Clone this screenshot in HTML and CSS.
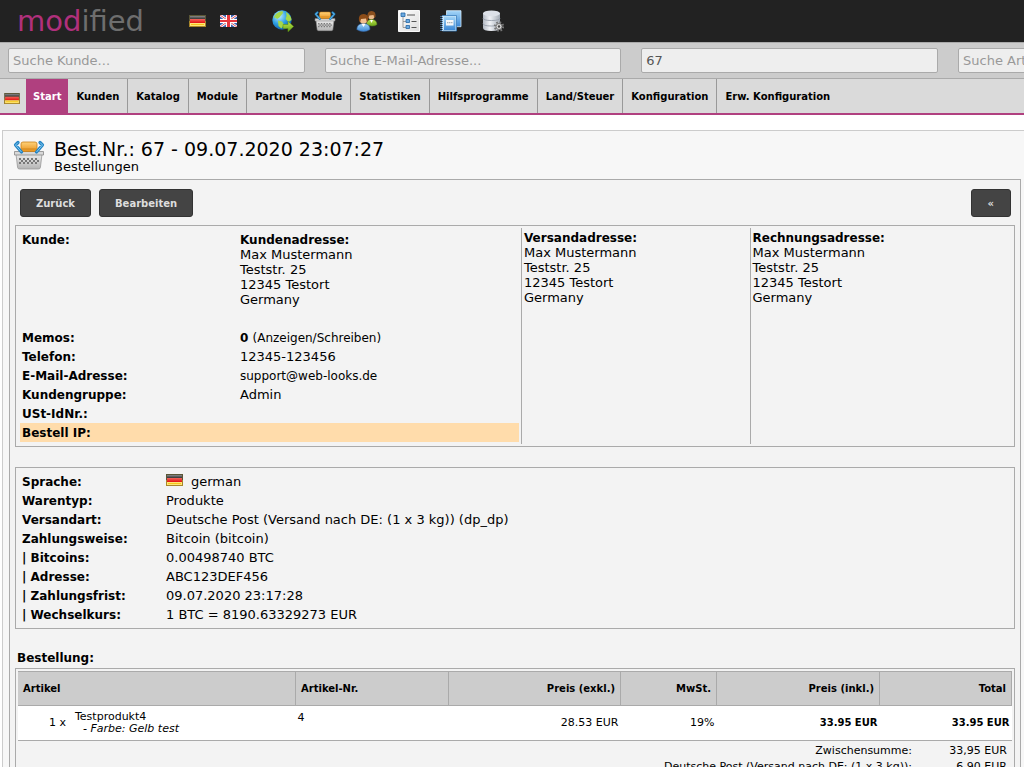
FILE: index.html
```html
<!DOCTYPE html>
<html lang="de">
<head>
<meta charset="utf-8">
<title>Bestellungen</title>
<link rel="stylesheet" href="styles.css">
</head>
<body>
<svg class="defs" aria-hidden="true">
  <defs>
    <linearGradient id="gRed" x2="0" y2="1"><stop stop-color="#f4665c"/><stop offset="1" stop-color="#e01010"/></linearGradient>
    <linearGradient id="gBlack" x2="0" y2="1"><stop stop-color="#8a8a8a"/><stop offset="1" stop-color="#333"/></linearGradient>
    <linearGradient id="gMetal" x2="0" y2="1"><stop stop-color="#ececec"/><stop offset="1" stop-color="#b4b4b4"/></linearGradient>
    <linearGradient id="gOrange" x2="0" y2="1"><stop stop-color="#ffd27a"/><stop offset="1" stop-color="#e8921c"/></linearGradient>
    <linearGradient id="gBlue" x2="0" y2="1"><stop stop-color="#a4d6f8"/><stop offset="1" stop-color="#3c88d6"/></linearGradient>
    <linearGradient id="gPaper" x2="1" y2="1"><stop stop-color="#fff"/><stop offset="1" stop-color="#dcdcdc"/></linearGradient>
    <radialGradient id="gSea" cx=".35" cy=".3" r=".8"><stop stop-color="#c4f0ff"/><stop offset=".5" stop-color="#2ea0e4"/><stop offset="1" stop-color="#0a4f9e"/></radialGradient>
    <linearGradient id="gDb" x2="1" y2="0"><stop stop-color="#b4bac4"/><stop offset=".4" stop-color="#f0f2f6"/><stop offset="1" stop-color="#a4acb6"/></linearGradient>
    <linearGradient id="gGreen" x2="0" y2="1"><stop stop-color="#bfe64c"/><stop offset="1" stop-color="#6ca61a"/></linearGradient>
  </defs>
  <symbol id="flag-de" viewBox="0 0 17 12">
    <path fill="#5a5636" d="M0 0h17v12H0z"/><path fill="#a8862a" d="M0 6h17v6H0z"/>
    <path fill="url(#gBlack)" d="M1 1h15v3H1z"/><path fill="url(#gRed)" d="M1 4h15v4H1z"/><path fill="#ffe676" d="M1 8h15v3H1z"/><path fill="#f4c61c" d="M2 9h13v1H2z"/>
  </symbol>
  <symbol id="flag-gb" viewBox="0 0 17 12">
    <path fill="#3f62b4" d="M0 0h17v12H0z"/><path stroke="#fff" stroke-width="2.600" d="M0 0l17 12M17 0L0 12"/><path stroke="#e0525c" stroke-width="1" d="M0 0l17 12M17 0L0 12"/>
    <path fill="#fff" d="M6 0h5v12H6zM0 4h17v4H0z"/><path fill="#e8363e" d="M7 0h3v12H7zM0 5h17v2H0z"/>
  </symbol>
  <symbol id="basket" viewBox="0 0 32 32">
    <path fill="url(#gMetal)" stroke="#999" stroke-width=".8" d="M3 15h26l-1.600 13.500q-.2 1.500-2 1.500H6.600q-1.800 0-2-1.500z"/>
    <path fill="#d8d8d8" stroke="#888" stroke-width=".8" d="M1.500 12.500h29v3.500h-29z"/>
    <path fill="#777" d="M6 19h2v2H6zm4 0h2v2h-2zm4 0h2v2h-2zm4 0h2v2h-2zm4 0h2v2h-2zM8 21h2v2H8zm4 0h2v2h-2zm4 0h2v2h-2zm4 0h2v2h-2zm4 0h2v2h-2zM6 23h2v2H6zm4 0h2v2h-2zm4 0h2v2h-2zm4 0h2v2h-2zm4 0h2v2h-2z"/>
    <rect x="8" y="3" width="16" height="9.500" rx="2" fill="url(#gOrange)" stroke="#c98018" stroke-width=".8"/>
    <path stroke="#c98018" stroke-width=".8" d="M9 10h14"/>
    <path fill="none" stroke="#2484c4" stroke-width="3.200" stroke-linecap="round" stroke-linejoin="round" d="M5 3.500L2.500 6l6 7M27 3.500L29.500 6l-6 7"/>
    <path fill="none" stroke="#84ccf2" stroke-width="1" d="M5 3.500L2.500 6l6 7M27 3.500L29.500 6l-6 7"/>
  </symbol>
  <symbol id="globe" viewBox="0 0 22 22">
    <circle cx="10" cy="10" r="9.700" fill="url(#gSea)"/>
    <path fill="#a4d84a" d="M4.500 3.500q3-2.500 6-2.500l.5 2-2 2.500-1.500 2L5 9 3.500 7.500 2 8q.3-2.500 2.500-4.500zM14 2q5 3 5.500 8l-3 2-3-3 1-3zM6 10.500l4 1 2 3-2.500 4-3-2.500z"/>
    <path fill="url(#gGreen)" stroke="#5c9412" stroke-width=".6" d="M11 14.500h5v-3.200l5.600 5.200-5.600 5.200v-3.200h-5z"/>
  </symbol>
  <symbol id="users" viewBox="0 0 22 22">
    <path fill="url(#gGreen)" stroke="#5d8a22" stroke-width=".5" d="M10.500 15q0-5.500 5-5.500t5.500 5q-2 1.500-5 1.500z"/><path fill="#fff" d="M14 10h3l-1.500 3z"/><circle cx="15.300" cy="6" r="3.300" fill="#eaba8a"/><path fill="#8a4f1e" d="M11.500 7.500Q10.800 1 15.500 1t4 6l-1.200 1-.8-3-4.200.5-.6 2.500z"/>
    <path fill="url(#gBlue)" stroke="#3868a8" stroke-width=".6" d="M.8 19.500Q1 13.500 7.500 13.500t6.500 6q-3 2-6.500 2t-6.700-2z"/><path fill="#fff" d="M5.500 13.700h4l-2 3.300z"/><circle cx="7.500" cy="9.500" r="4" fill="#f2c090"/><path fill="#8c4c18" d="M3 11Q2 4 7.600 4t4.400 7l-1.200 1-.8-3.500L5 9l-.8 3z"/>
  </symbol>
  <symbol id="tree" viewBox="0 0 22 22">
    <path fill="url(#gPaper)" stroke="#f8f8f8" d="M.5.500h21v21H.5z"/><path fill="none" stroke="#888" stroke-width=".8" d="M5 7v10.500h3M5 11.500h3"/><path stroke="#444" stroke-width=".9" d="M9 5h8M13.500 11.500h5M13.500 17.500h5"/>
    <path fill="#6caae0" stroke="#2466a4" stroke-width=".8" d="M3 3h4v3.500H3zM8 9.500h3.500v3H8zM8 15.500h3.500v3H8z"/>
  </symbol>
  <symbol id="books" viewBox="0 0 22 22">
    <path fill="url(#gBlue)" stroke="#d4ebfa" stroke-width=".8" d="M6.500.700h14.500v16H6.500z"/><path fill="#cfe6f6" stroke="#3a7fbe" stroke-width=".8" d="M2.500 5.500h14v15.500h-14z"/><path fill="url(#gBlue)" d="M4 6.500h11.500v13.500H4z"/>
    <path fill="#f6f8fa" d="M6 10h7.500v5.500H6z"/><path stroke="#7a8c9c" stroke-width=".8" stroke-dasharray="1.500 .5" d="M7 12.700h5.500"/><path stroke="#dff0ff" stroke-width="1" stroke-dasharray="1 1" d="M2.300 6v15"/><path stroke="#4a8ccc" stroke-width="1.200" stroke-dasharray="1 1" d="M1 6v15"/>
  </symbol>
  <symbol id="database" viewBox="0 0 22 22">
    <path fill="url(#gDb)" d="M1 3v15q0 3 8.500 3t8.500-3V3z"/><ellipse cx="9.500" cy="3.400" rx="8.500" ry="2.900" fill="#dde1e8"/><path fill="none" stroke="#969eaa" stroke-width=".9" d="M1 8q0 2.500 8.500 2.500T18 8M1 13.500q0 2.500 8.500 2.500t8.500-2.500"/>
    <circle cx="17" cy="16.500" r="4.200" fill="none" stroke="#777" stroke-width="2" stroke-dasharray="1.650 1.650"/><circle cx="17" cy="16.500" r="3" fill="#ddd" stroke="#777" stroke-width="1"/><circle cx="17" cy="16.500" r="1.200" fill="#444"/>
  </symbol>
</svg>

<header class="topbar">
  <a class="logo" href="#"><span class="logo-accent">mod</span>ified</a>
  <nav class="langs" aria-label="Sprache">
    <a href="#" aria-label="Deutsch"><svg class="flag"><use href="#flag-de"/></svg></a>
    <a href="#" aria-label="English"><svg class="flag"><use href="#flag-gb"/></svg></a>
  </nav>
  <nav class="tools" aria-label="Schnellzugriff">
    <a href="#" aria-label="Shop"><svg><use href="#globe"/></svg></a>
    <a href="#" aria-label="Bestellungen"><svg><use href="#basket"/></svg></a>
    <a href="#" aria-label="Kunden"><svg><use href="#users"/></svg></a>
    <a href="#" aria-label="Kategorien"><svg><use href="#tree"/></svg></a>
    <a href="#" aria-label="Content"><svg><use href="#books"/></svg></a>
    <a href="#" aria-label="Datenbank"><svg><use href="#database"/></svg></a>
  </nav>
</header>

<form class="searchbar">
  <input type="text" aria-label="Suche Kunde" placeholder="Suche Kunde...">
  <input type="text" aria-label="Suche E-Mail-Adresse" placeholder="Suche E-Mail-Adresse...">
  <input type="text" aria-label="Suche Bestellung" value="67">
  <input type="text" aria-label="Suche Artikel" placeholder="Suche Artikel...">
</form>

<nav class="menu" aria-label="Hauptmenü">
  <a class="menu-flag" href="#" aria-label="Deutsch"><svg class="flag"><use href="#flag-de"/></svg></a>
  <a class="active" href="#">Start</a>
  <a href="#">Kunden</a>
  <a href="#">Katalog</a>
  <a href="#">Module</a>
  <a href="#">Partner Module</a>
  <a href="#">Statistiken</a>
  <a href="#">Hilfsprogramme</a>
  <a href="#">Land/Steuer</a>
  <a href="#">Konfiguration</a>
  <a href="#">Erw. Konfiguration</a>
</nav>

<main class="page">
  <div class="heading">
    <svg class="heading-icon" aria-hidden="true"><use href="#basket"/></svg>
    <div>
      <h1>Best.Nr.: 67 - 09.07.2020 23:07:27</h1>
      <p>Bestellungen</p>
    </div>
  </div>

  <div class="content">
    <div class="actions">
      <button type="button">Zurück</button>
      <button type="button">Bearbeiten</button>
      <button type="button" class="collapse" aria-label="Seitenleiste">«</button>
    </div>

    <section class="box customer">
      <table class="facts customer-facts">
        <tr class="address-row"><th>Kunde:</th><td><b>Kundenadresse:</b><br>Max Mustermann<br>Teststr. 25<br>12345 Testort<br>Germany</td></tr>
        <tr><th>Memos:</th><td><b>0</b> <a class="small" href="#">(Anzeigen/Schreiben)</a></td></tr>
        <tr><th>Telefon:</th><td>12345-123456</td></tr>
        <tr><th>E-Mail-Adresse:</th><td><a class="small" href="#">support@web-looks.de</a></td></tr>
        <tr><th>Kundengruppe:</th><td>Admin</td></tr>
        <tr><th>USt-IdNr.:</th><td></td></tr>
        <tr class="highlight"><th>Bestell IP:</th><td></td></tr>
      </table>
      <address><b>Versandadresse:</b><br>Max Mustermann<br>Teststr. 25<br>12345 Testort<br>Germany</address>
      <address><b>Rechnungsadresse:</b><br>Max Mustermann<br>Teststr. 25<br>12345 Testort<br>Germany</address>
    </section>

    <section class="box payment">
      <table class="facts payment-facts">
        <tr><th>Sprache:</th><td><svg class="flag" aria-hidden="true"><use href="#flag-de"/></svg>german</td></tr>
        <tr><th>Warentyp:</th><td>Produkte</td></tr>
        <tr><th>Versandart:</th><td>Deutsche Post (Versand nach DE: (1 x 3 kg)) (dp_dp)</td></tr>
        <tr><th>Zahlungsweise:</th><td>Bitcoin (bitcoin)</td></tr>
        <tr><th>| Bitcoins:</th><td>0.00498740 BTC</td></tr>
        <tr><th>| Adresse:</th><td>ABC123DEF456</td></tr>
        <tr><th>| Zahlungsfrist:</th><td>09.07.2020 23:17:28</td></tr>
        <tr><th>| Wechselkurs:</th><td>1 BTC = 8190.63329273 EUR</td></tr>
      </table>
    </section>

    <h2>Bestellung:</h2>
    <section class="box order">
      <table class="items">
        <colgroup><col class="c-qty"><col><col class="c-model"><col class="c-net"><col class="c-tax"><col class="c-gross"><col class="c-total"></colgroup>
        <thead>
          <tr><th colspan="2">Artikel</th><th>Artikel-Nr.</th><th class="num">Preis (exkl.)</th><th class="num">MwSt.</th><th class="num">Preis (inkl.)</th><th class="num">Total</th></tr>
        </thead>
        <tbody>
          <tr><td class="num">1 x</td><td class="name">Testprodukt4<br><i>- Farbe: Gelb test</i></td><td class="model">4</td><td class="num">28.53 EUR</td><td class="num">19%</td><td class="num strong">33.95 EUR</td><td class="num strong">33.95 EUR</td></tr>
        </tbody>
      </table>
      <dl class="sums">
        <dt>Zwischensumme:</dt><dd>33,95 EUR</dd>
        <dt>Deutsche Post (Versand nach DE: (1 x 3 kg)):</dt><dd>6,90 EUR</dd>
      </dl>
    </section>
  </div>
</main>
</body>
</html>
```
FILE: styles.css
```css
* { box-sizing: border-box; }

html { overflow: hidden; }

body {
  margin: 0;
  background: #fff;
  color: #000;
  font: 13px/15px Verdana, "DejaVu Sans", sans-serif;
}

a { color: inherit; text-decoration: none; }
b { font-size: 12px; line-height: 13px; }

.defs { position: absolute; width: 0; height: 0; }

.flag { display: block; width: 17px; height: 12px; }

.topbar {
  display: flex;
  align-items: center;
  height: 43px;
  padding-left: 17px;
  background: #222;
  border-bottom: 1px solid #aaa;
}

.logo {
  width: 172px;
  color: #6e6e6e;
  font-size: 29px;
  line-height: 34px;
}

.logo-accent { color: #b0307c; }

.langs { display: flex; gap: 14px; width: 83px; }

.tools { display: flex; gap: 20px; }
.tools svg { display: block; width: 22px; height: 22px; }

.searchbar {
  display: flex;
  gap: 20px;
  height: 36px;
  padding: 5px 0 5px 8px;
  overflow: hidden;
  background: #ccc;
  border-bottom: 1px solid #aaa;
}

.searchbar input {
  flex: 0 0 29.2%;
  width: 29.2%;
  height: 25px;
  padding: 0 4px;
  background: #eee;
  border: 1px solid #aaa;
  border-radius: 2px;
  color: #555;
  font: inherit;
}

.searchbar input::placeholder { color: #999; opacity: 1; }

.menu {
  display: flex;
  height: 36px;
  background: #dadada;
  border-bottom: 2px solid #b0407f;
  font-size: 10px;
  font-weight: bold;
  line-height: 35px;
}

.menu a { padding: 0 8px; border-right: 1px solid #999; white-space: nowrap; }
.menu a:last-child { border-right: 0; }
.menu .menu-flag { padding: 14px 6px 0 4px; border: 0; }
.menu .menu-flag svg { width: 16px; height: 11px; }
.menu .active { padding: 0 7px; background: #b0407f; border: 0; color: #fff; }

.page {
  margin: 15px 0 0 2px;
  padding: 0 3px 0 6px;
  background: #f7f7f7;
  border: 1px solid #ccc;
  border-right: 0;
}

.heading { display: flex; gap: 9px; height: 48px; padding: 8px 4px; }
.heading-icon { width: 32px; height: 32px; }
.heading h1 { margin: 0; font-size: 19px; font-weight: normal; line-height: 20px; }
.heading p { margin: 0; }

.content {
  padding: 9px 5px;
  background: #f3f3f3;
  border: 1px solid #aaa;
}

.actions { display: flex; gap: 8px; padding: 0 4px 8px 5px; }

button {
  height: 28px;
  padding: 0 15px;
  background: #444;
  border: 1px solid #333;
  border-radius: 3px;
  color: #ddd;
  font: bold 10px/15px Verdana, "DejaVu Sans", sans-serif;
}

.actions .collapse { margin-left: auto; padding: 0 16px; }

.box { border: 1px solid #aaa; }

.customer {
  display: grid;
  grid-template-columns: 506fr 229fr 265fr;
  padding: 2px 0;
}

.customer address {
  padding: 2px;
  border-left: 1px solid #aaa;
  font-style: normal;
}

.facts { width: 100%; border-collapse: collapse; table-layout: fixed; }
.facts th, .facts td { height: 19px; padding: 2px; text-align: left; vertical-align: top; }
.facts th { font-size: 12px; line-height: 16px; padding-bottom: 1px; }
.facts .address-row td { height: 98px; }
.facts .flag { display: inline-block; margin-right: 8px; }
.small { font-size: 12px; line-height: 13px; }

.customer-facts { width: auto; margin: 2px 2px 2px 4px; }
.customer-facts th { width: 218px; }
.highlight { background: #ffdcab; }

.payment { margin-top: 20px; padding: 4px; }
.payment-facts th { width: 144px; }

h2 { margin: 22px 0 2px 2px; font-size: 12px; line-height: 15px; }

.order { padding: 2px; font-size: 11px; line-height: 12px; }

.items { width: 100%; border-collapse: collapse; table-layout: fixed; }
.items th {
  height: 34px;
  padding: 0 5px;
  background: #ccc;
  border: 1px solid #aaa;
  font-size: 10px;
  text-align: left;
}
.items th:first-child { border-left: 0; }
.items td { height: 35px; padding: 2px; background: #fff; border-bottom: 1px solid #aaa; }
.items .num { text-align: right; }
.items .strong { font-size: 10px; font-weight: bold; }
.items .name { padding-left: 7px; }
.items i { padding-left: 8px; }
.items .model { padding-top: 6px; vertical-align: top; }

.c-qty { width: 50px; }
.c-model { width: 153px; }
.c-net { width: 172px; }
.c-tax { width: 96px; }
.c-gross { width: 163px; }
.c-total { width: 132px; }

.sums {
  display: grid;
  grid-template-columns: 1fr 95px;
  margin: 2px 5px 0 0;
  line-height: 16px;
  text-align: right;
}
.sums dd { margin: 0; }
```
